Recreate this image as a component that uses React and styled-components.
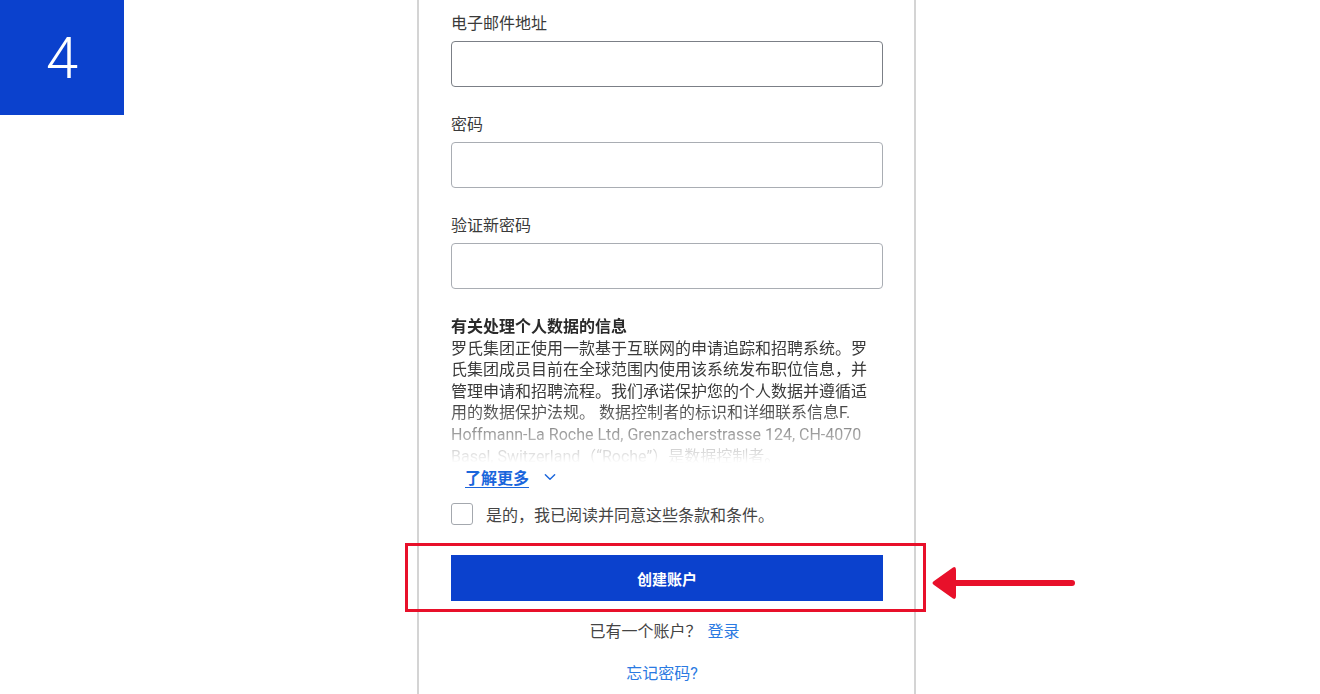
import React from "react";
import styled, { createGlobalStyle } from "styled-components";

const Global = createGlobalStyle`
  html, body { margin: 0; padding: 0; background: #fff; }
  body { font-family: Roboto, "Noto Sans CJK SC", sans-serif; color: #333; overflow: hidden; }
  * { box-sizing: border-box; }
`;

const Page = styled.div`
  position: relative;
  width: 1320px;
  height: 694px;
  overflow: hidden;
  display: grid;
  grid-template-columns: 417px 499px 1fr;
`;

const StepBadge = styled.div`
  position: absolute;
  left: 0;
  top: 0;
  width: 124px;
  height: 115px;
  background: #0b41cd;
  color: #fff;
  display: flex;
  align-items: center;
  justify-content: center;
  font-family: Roboto, sans-serif;
  font-weight: 300;
  font-size: 58px;
  z-index: 2;
`;

const Card = styled.div`
  grid-column: 2;
  border-left: 2px solid #d4d4d4;
  border-right: 2px solid #d4d4d4;
  padding: 12px 31px 0 32px;
  display: flex;
  flex-direction: column;
  height: 694px;
`;

const Field = styled.div`
  display: flex;
  flex-direction: column;
  margin-bottom: 26px;
`;

const Label = styled.label`
  font-size: 16px;
  line-height: 24px;
  color: #3a3a3a;
  margin-bottom: 5px;
`;

const Input = styled.div`
  height: 46px;
  border: 1px solid ${(p) => (p.$focused ? "#7b7f86" : "#a9adb3")};
  border-radius: 4px;
  background: #fff;
`;

const Info = styled.div`
  margin-top: 1px;
  padding-right: 10px;
  height: 147px;
  overflow: hidden;
  font-size: 16px;
  line-height: 21.6px;
  color: #3a3a3a;
  -webkit-mask-image: linear-gradient(to bottom, #000 87px, transparent 147px);
  mask-image: linear-gradient(to bottom, #000 87px, transparent 147px);
`;

const InfoTitle = styled.div`
  font-weight: 700;
  color: #2a2a2a;
`;

const MoreRow = styled.div`
  display: flex;
  align-items: center;
  gap: 14px;
  padding-left: 14px;
  height: 30px;
  margin-top: -1px;
`;

const MoreLink = styled.a`
  color: #1a66dc;
  font-size: 16px;
  font-weight: 700;
  text-decoration: underline;
  text-underline-offset: 3px;
  cursor: pointer;
`;

const Chevron = styled.svg`
  width: 14px;
  height: 14px;
  color: #1a66dc;
`;

const CheckRow = styled.label`
  display: flex;
  align-items: center;
  gap: 13px;
  margin-top: 10px;
  font-size: 16px;
  color: #444;
`;

const Box = styled.span`
  width: 22px;
  height: 22px;
  border: 1px solid #a4a8ae;
  border-radius: 3px;
  background: #fff;
`;

const Highlight = styled.div`
  position: relative;
  margin: 17px -43px 0 -46px;
  border: 3px solid #e8102a;
  padding: 9px 40px 8px 43px;
`;

const PrimaryButton = styled.button`
  display: block;
  width: 100%;
  height: 46px;
  border: none;
  background: #0b41cd;
  color: #fff;
  font-family: Roboto, "Noto Sans CJK SC", sans-serif;
  font-weight: 700;
  font-size: 15px;
`;

const Arrow = styled.svg`
  position: absolute;
  left: 523px;
  top: 20px;
  width: 145px;
  height: 34px;
`;

const CenterLine = styled.div`
  text-align: center;
  font-size: 16px;
  line-height: 22px;
  color: ${(p) => p.$color || "#444"};
  margin-top: ${(p) => p.$mt}px;
  padding-right: ${(p) => p.$shift || 0}px;
`;

const InlineLink = styled.a`
  color: #2a7ae2;
  margin-left: 6px;
`;

export default function App() {
  return (
    <Page>
      <Global />
      <StepBadge>4</StepBadge>
      <Card>
        <Field>
          <Label>电子邮件地址</Label>
          <Input $focused />
        </Field>
        <Field>
          <Label>密码</Label>
          <Input />
        </Field>
        <Field>
          <Label>验证新密码</Label>
          <Input />
        </Field>
        <Info>
          <InfoTitle>有关处理个人数据的信息</InfoTitle>
          罗氏集团正使用一款基于互联网的申请追踪和招聘系统。罗氏集团成员目前在全球范围内使用该系统发布职位信息，并管理申请和招聘流程。我们承诺保护您的个人数据并遵循适用的数据保护法规。 数据控制者的标识和详细联系信息F. Hoffmann-La Roche Ltd, Grenzacherstrasse 124, CH-4070 Basel, Switzerland（“Roche”）是数据控制者。
        </Info>
        <MoreRow>
          <MoreLink>了解更多</MoreLink>
          <Chevron viewBox="0 0 24 24" fill="none" stroke="currentColor" strokeWidth="2.4" strokeLinecap="round" strokeLinejoin="round">
            <path d="M4 8l8 8 8-8" />
          </Chevron>
        </MoreRow>
        <CheckRow>
          <Box />
          是的，我已阅读并同意这些条款和条件。
        </CheckRow>
        <Highlight>
          <PrimaryButton>创建账户</PrimaryButton>
          <Arrow viewBox="0 0 145 34">
            <path d="M3 15 L22 1.5 Q25 0 25 4 L25 30 Q25 34 22 32.5 L3 19 Q0 17 3 15 Z" fill="#e8102a" />
            <line x1="22" y1="17" x2="141" y2="17" stroke="#e8102a" strokeWidth="6" strokeLinecap="round" />
          </Arrow>
        </Highlight>
        <CenterLine $mt={9} $shift={5}>
          已有一个账户？<InlineLink>登录</InlineLink>
        </CenterLine>
        <CenterLine $mt={20} $shift={10} $color="#2a7ae2">忘记密码?</CenterLine>
      </Card>
    </Page>
  );
}
